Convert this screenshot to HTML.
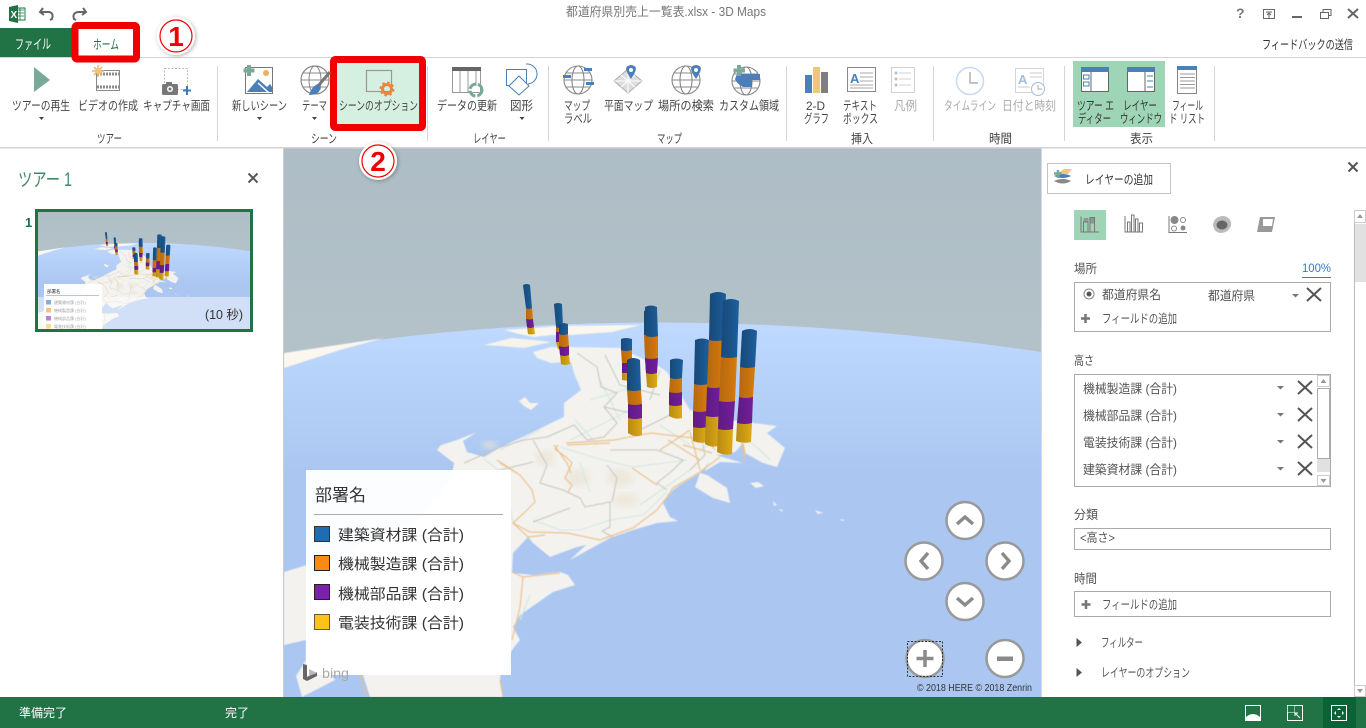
<!DOCTYPE html>
<html lang="ja"><head><meta charset="utf-8"><title>3D Maps</title>
<style>
html,body{margin:0;padding:0;background:#fff;overflow:hidden}
svg{display:block}
text{font-family:"Liberation Sans","Noto Sans CJK JP",sans-serif;font-size:12.4px;fill:#444}
.g{fill:#aaa}.s{fill:#555;font-size:12.4px}.p{fill:#555;font-size:12.5px}
.y{fill:url(#gy)}.v{fill:url(#gv)}.o{fill:url(#go)}.b{fill:url(#gb)}
.rd{fill:none;stroke:#ecc184;stroke-width:1.2}
.rg{fill:none;stroke:#c6c3bc;stroke-width:1}
.rn{fill:none;stroke:#d2e8e1;stroke-width:1.1}
.nb{fill:#fff;stroke:#999;stroke-width:2.5}
.na{fill:none;stroke:#8a8a8a;stroke-width:3.4}
</style></head><body>
<svg xmlns="http://www.w3.org/2000/svg" width="1366" height="728" viewBox="0 0 1366 728">
<defs>
<linearGradient id="gsky" x1="0" y1="0" x2="0" y2="1"><stop offset="0" stop-color="#aebdc5"/><stop offset="1" stop-color="#bccbd0"/></linearGradient>
<linearGradient id="gsea" gradientUnits="userSpaceOnUse" x1="0" y1="320" x2="0" y2="470"><stop offset="0" stop-color="#bfd9ff"/><stop offset="1" stop-color="#abc7f1"/></linearGradient>
<linearGradient id="gb"><stop offset="0" stop-color="#17497a"/><stop offset=".5" stop-color="#1a5388"/><stop offset="1" stop-color="#1c5f9f"/></linearGradient>
<linearGradient id="go"><stop offset="0" stop-color="#b5690f"/><stop offset=".6" stop-color="#c8720d"/><stop offset="1" stop-color="#d87c0c"/></linearGradient>
<linearGradient id="gv"><stop offset="0" stop-color="#5e1a84"/><stop offset="1" stop-color="#721f9a"/></linearGradient>
<linearGradient id="gy"><stop offset="0" stop-color="#b68a14"/><stop offset=".6" stop-color="#cf9d14"/><stop offset="1" stop-color="#dcaa18"/></linearGradient>
<clipPath id="cm"><rect x="284" y="148" width="757" height="549"/></clipPath>
<clipPath id="ct"><rect x="38" y="212" width="212" height="117"/></clipPath>
<filter id="bl1"><feGaussianBlur stdDeviation="3.500"/></filter>
<filter id="bl2" x="-2%" y="-2%" width="104%" height="104%"><feGaussianBlur stdDeviation=".45"/></filter>
<filter id="sh" x="-30%" y="-30%" width="160%" height="160%"><feDropShadow dx="1" dy="1" stdDeviation="2" flood-color="#000" flood-opacity=".3"/></filter>
<g id="mapg">
<rect x="284" y="148" width="757" height="549" fill="url(#gsky)"/>
<path d="M284 354Q640 292 1041 352V697H284Z" fill="url(#gsea)"/>
<g filter="url(#bl2)">
<path d="M284 353L384 338 340 350 284 368Z" fill="#fbf7ee"/>
<path d="M504 330L560 326 641 325 612 332 571 335 551 335 534 337 515 333Z" fill="#fbf7ee"/>
<path d="M484 345L511 338 535 340 551 342 524 348 500 346Z" fill="#f6f3ea"/>
<path d="M519 401L525 397 530 403 539 403 531 410 524 406Z" fill="#f6f3ea"/>
<g fill="#f3f2ee">
<polygon points="533,352 551,347 574,347 620,348 660,367 667,372 690,410 735,421 743,443 735,452 712,456 705,468 700,473 680,485 673,490 663,503 670,517 678,521 657,523 633,530 610,538 570,560 586,545 577,547 550,557 533,543 528,537 513,553 512,573 533,575 560,572 568,575 575,585 553,592 520,615 513,627 520,640 512,650 500,677 503,697 370,697 362,672 330,672 335,680 302,697 296,676 306,660 306,640 284,645 284,572 340,555 420,520 444,487 451,480 454,463 437,450 441,445 457,440 477,432 463,441 467,452 484,457 501,447 531,433 551,423 564,417 564,403 581,390 574,373 571,362 551,363 537,358"/>
<polygon points="730,420 777,426 767,433 785,448 777,467 763,463 745,453 743,443"/>
<polygon points="700,473 707,475 727,488 730,503 713,498 695,487"/>
<polygon points="712,454 743,463 720,462 705,471"/>
<path d="M750 483L758 482 764 486 756 488Z M773 501L777 505 774 506Z M779 509L783 510 782 512Z M815 510L823 513 818 514Z M840 519L845 520 842 521Z"/>
</g>
<g fill="#ebe4d6" opacity=".75"><ellipse cx="545" cy="458" rx="10" ry="8" filter="url(#bl1)"/><ellipse cx="578" cy="478" rx="12" ry="9" filter="url(#bl1)"/><ellipse cx="620" cy="478" rx="13" ry="9" filter="url(#bl1)"/><ellipse cx="625" cy="500" rx="13" ry="7" filter="url(#bl1)"/><ellipse cx="490" cy="445" rx="8" ry="4" filter="url(#bl1)"/></g>
<path class="rn" d="M580 462L590 492M560 447L603 460 633 467 687 460M510 507L513 523M533 520L560 530 580 530 610 520 643 515 667 492M700 450L720 437M570 440L640 405M600 380L620 420M540 430L500 450M484 459L505 475 510 507M640 505L690 470M745 438L760 450 770 460M590 400L640 385M575 420L598 445M520 620L530 595M660 425L690 445"/>
<path class="rg" d="M533 440L547 465 540 483 563 490 580 498 585 507 610 502 610 527 602 531 613 537M570 508L533 522M607 465L617 478 612 502M610 450L657 450 683 460 673 470 657 483 667 490M464 463L501 447 524 440 547 437 574 425 587 440 604 437 617 423 604 407 617 393 601 387 597 367 577 353M650 400L660 370M640 430L680 410M604 407L640 415M474 485L500 470 533 462M700 430L705 455 690 470M605 355L620 385 660 395"/>
<path class="rd" d="M500 463L520 475 532 490 535 502 525 512 513 523 530 532 567 533 600 540 633 528 657 510 667 497 673 488 700 472 720 457M558 445L555 449 567 458 572 463 565 478 572 485 568 492M567 445L610 443M632 468L657 485M554 445L567 463 571 473M566 443L614 440 651 433 684 437 720 440M497 460L517 473M512 572L523 577 560 573M523 577L520 607 512 640M513 523L528 537 545 535M660 450L690 430M743 443L745 453M700 430L715 450M683 445L712 453M690 432L700 470M668 440L700 460M745 460L742 443M360 675L366 695M500 680L503 697"/>
</g>
<g>
<path class="y" d="M556 342H562V349Q560 350 558 349Z"/><path class="v" d="M556 332H563V342H556Z"/><path class="o" d="M556 327H563V332H556Z"/><path class="b" d="M554 304Q558 302 562 304L563 327Q559 329 556 327Z"/>
<path class="y" d="M527 327L534 327 535 334Q531 335 528 334Z"/><path class="v" d="M526 319L533 319 534 327Q530 329 527 327Z"/><path class="o" d="M526 308L532 308 533 319Q529 320 526 319Z"/><path class="b" d="M523 285Q527 283 530 285L532 308Q529 310 526 308Z"/>
<path class="y" d="M560 355L569 355 570 364Q565 366 561 364Z"/><path class="v" d="M559 346L569 346 569 355Q564 357 560 355Z"/><path class="o" d="M559 334L568 334 569 346Q564 348 559 346Z"/><path class="b" d="M559 324Q563 322 568 324L568 334Q563 336 559 334Z"/>
<path class="y" d="M622 373L630 373 628 381 622 380Z"/><path class="v" d="M622 363L632 363 630 373 622 373Z"/><path class="o" d="M621 350L632 350 632 363 622 363Z"/><path class="b" d="M621 339Q626 337 632 339L632 350Q626 352 621 350Z"/>
<path class="y" d="M646 373H650V375H646Z"/><path class="v" d="M645 358H650V373H646Z"/><path class="o" d="M644 335H650V358H645Z"/><path class="b" d="M644 311Q647 309 650 311V335H644Z"/>
<path class="y" d="M646 373L657 373 657 387Q652 389 647 387Z"/><path class="v" d="M645 358L658 358 657 373Q651 375 646 373Z"/><path class="o" d="M646 336L658 336 658 358Q651 360 645 358Z"/><path class="b" d="M645 307Q651 304 657 307L658 336Q652 338 646 336Z"/>
<path class="y" d="M628 418L642 418 642 435Q635 438 628 433Z"/><path class="v" d="M628 404L642 404 642 418Q635 420 628 418Z"/><path class="o" d="M627 390L641 390 642 404Q635 406 628 404Z"/><path class="b" d="M627 360Q633 356 640 360L641 390Q634 392 627 390Z"/>
<path class="y" d="M669 405L682 405 682 418Q676 420 669 416Z"/><path class="v" d="M669 392L682 392 682 405Q675 407 669 405Z"/><path class="o" d="M670 378L682 378 682 392Q676 394 669 392Z"/><path class="b" d="M670 360Q676 357 683 360L682 378Q676 380 670 378Z"/>
<path class="y" d="M693 427L707 427 707 442Q700 444 693 441Z"/><path class="v" d="M693 411L707 411 707 427Q700 429 693 427Z"/><path class="o" d="M694 384L708 384 707 411Q700 413 693 411Z"/><path class="b" d="M695 340Q702 337 709 340L708 384Q701 386 694 384Z"/>
<path class="y" d="M706 416L721 416 718 446Q711 448 705 444Z"/><path class="v" d="M707 387L722 387 721 416Q713 418 706 416Z"/><path class="o" d="M709 340L724 340 722 387Q714 389 707 387Z"/><path class="b" d="M710 294Q718 290 726 294L724 340Q716 342 709 340Z"/>
<path class="y" d="M737 423L752 423 751 442Q743 444 736 441Z"/><path class="v" d="M739 397L753 397 752 423Q745 425 737 423Z"/><path class="o" d="M740 367L755 367 753 397Q746 399 739 397Z"/><path class="b" d="M742 331Q750 327 757 331L755 367Q747 369 740 367Z"/>
<path class="y" d="M718 429L733 429 732 454Q724 456 717 452Z"/><path class="v" d="M719 401L735 401 733 429Q725 431 718 429Z"/><path class="o" d="M721 357L737 357 735 401Q727 403 719 401Z"/><path class="b" d="M723 301Q731 297 739 301L737 357Q729 359 721 357Z"/>
</g>
</g>
</defs>

<g clip-path="url(#cm)"><use href="#mapg"/></g>
<rect x="283" y="148" width="1" height="549" fill="#ccc"/>

<rect width="1366" height="148" fill="#fff"/>
<rect x="0" y="57" width="1366" height="1" fill="#d4d4d4"/>
<rect x="0" y="147" width="1366" height="1.5" fill="#d4d4d4"/>
<rect x="14" y="8" width="11" height="12" fill="#fff" stroke="#217346"/><path d="M17 10H24M17 13H24M17 16H24M20 8V20" stroke="#217346" stroke-width=".8"/>
<path d="M9 7L18 5V23L9 21Z" fill="#217346"/><text x="10.500" y="18" style="font-size:10px;font-weight:bold;fill:#fff">X</text>
<path d="M43 8L40 12 44 15M41 12H49Q54 13 52 19L50 20" fill="none" stroke="#666" stroke-width="2"/>
<path d="M83 8L86 12 82 15M85 12H78Q72 13 74 19L76 20" fill="none" stroke="#666" stroke-width="2"/>
<text x="566" y="16" textLength="200" lengthAdjust="spacingAndGlyphs" style="font-size:12.5px;fill:#777">都道府県別売上一覧表.xlsx - 3D Maps</text>
<text x="1236" y="18" style="font-size:14px;font-weight:bold;fill:#777">?</text>
<path d="M1263.500 9.500H1274.500V18.500H1263.500ZM1266 12H1272M1269 18V13.500M1267 15L1269 13 1271 15" fill="none" stroke="#666"/>
<rect x="1292" y="16" width="10" height="2" fill="#666"/>
<path d="M1320.500 12.500H1328.500V18.500H1320.500ZM1323 12V9.500H1331V15.500H1329" fill="none" stroke="#666" stroke-width="1"/>
<path d="M1348 9L1358 18M1358 9L1348 18" stroke="#666" stroke-width="2"/>
<rect x="0" y="28" width="72" height="29" fill="#217346"/>
<text x="15" y="49" textLength="36" lengthAdjust="spacingAndGlyphs" style="font-size:13.5px;fill:#fff">ファイル</text>
<rect x="75" y="25.500" width="61.500" height="33.500" rx="2" fill="#fff" stroke="#f00000" stroke-width="7"/>
<text x="93" y="49" textLength="26" lengthAdjust="spacingAndGlyphs" style="font-size:13px;fill:#217346">ホーム</text>
<text x="1262" y="49" textLength="91" lengthAdjust="spacingAndGlyphs" style="font-size:12.5px;fill:#333">フィードバックの送信</text>

<circle cx="176" cy="36" r="19" fill="#fff" filter="url(#sh)"/>
<circle cx="176" cy="36" r="16" fill="none" stroke="#f00000" stroke-width="1.200"/>
<text x="176" y="46" text-anchor="middle" style="font-size:28px;font-weight:bold;fill:#f00000">1</text>

<rect x="1073" y="61" width="92" height="66" fill="#9fd5b7"/>
<rect x="333.500" y="59.500" width="89" height="68" rx="2" fill="#d5efe0" stroke="#f00000" stroke-width="7"/>

<g fill="#d4d4d4"><rect x="217" y="66" width="1" height="75"/><rect x="427" y="66" width="1" height="75"/><rect x="548" y="66" width="1" height="75"/><rect x="786" y="66" width="1" height="75"/><rect x="933" y="66" width="1" height="75"/><rect x="1064" y="66" width="1" height="75"/><rect x="1214" y="66" width="1" height="75"/></g>

<path d="M34 67V92L50 80Z" fill="#78aa97"/>
<rect x="96.500" y="70.500" width="23" height="20" fill="#fff" stroke="#8a8a8a"/><path d="M97 74H119M97 87H119" stroke="#8a8a8a" stroke-width="3" stroke-dasharray="2 1"/>
<g stroke="#f0b060" stroke-width="1.500"><path d="M98 65V77M92 71H104M94 67L102 75M102 67L94 75"/></g><circle cx="98" cy="71" r="3" fill="#f5c078"/>
<rect x="164.500" y="68.500" width="23" height="21" fill="none" stroke="#bbb" stroke-dasharray="2 1.500"/>
<rect x="162" y="84" width="16" height="11" rx="1.500" fill="#777"/><rect x="166" y="82" width="6" height="3" fill="#777"/><circle cx="170" cy="89" r="3" fill="#fff"/><circle cx="170" cy="89" r="1.500" fill="#777"/>
<path d="M187 86V95M183 90.500H191" stroke="#3b7cc0" stroke-width="2"/>
<rect x="245.500" y="67.500" width="27" height="26" fill="#fff" stroke="#777"/>
<path d="M247 92L258 79 267 87 270 84 272 87V92Z" fill="#4a7fb8"/><path d="M258 83L269 93" stroke="#fff" stroke-width="1.500"/>
<circle cx="266" cy="73" r="3" fill="#eeb060"/>
<path d="M249 65V76M243.500 70.500H254.500" stroke="#78aa97" stroke-width="4"/>
<circle cx="315" cy="80" r="14" fill="#fff" stroke="#888" stroke-width="1.200"/><ellipse cx="315" cy="80" rx="6" ry="14" fill="none" stroke="#888"/><path d="M301 80H329M303 73H327M303 87H327" stroke="#888"/>
<path d="M330 72L318 86" stroke="#777" stroke-width="3"/><path d="M318 84Q312 86 309 95Q318 95 321 88Z" fill="#4a7fb8"/>
<rect x="366.500" y="70.500" width="25" height="21" fill="#d5efe0" stroke="#999" stroke-width="1.200"/>
<circle cx="387" cy="89" r="4.500" fill="none" stroke="#e8883a" stroke-width="3"/><circle cx="387" cy="89" r="6.500" fill="none" stroke="#e8883a" stroke-width="2" stroke-dasharray="2.500 2.600"/>
<rect x="452.500" y="68.500" width="28" height="24" fill="#fff" stroke="#999"/><rect x="452" y="67" width="29" height="4" fill="#666"/><path d="M460 71V92M468 71V92M476 71V86" stroke="#999"/>
<circle cx="476" cy="90" r="6" fill="none" stroke="#78aa97" stroke-width="3" stroke-dasharray="8 2"/>
<rect x="506.500" y="69.500" width="20" height="16" fill="#fff" stroke="#4a7fb8"/>
<path d="M526 64A10 10 0 0 1 528 84" fill="none" stroke="#4a7fb8"/>
<path d="M519 79L529 89 519 98 509 89Z" transform="translate(0,-3)" fill="#fff" stroke="#4a7fb8"/>
<g fill="none" stroke="#888" stroke-width="1.100">
<circle cx="578" cy="80" r="14"/><ellipse cx="578" cy="80" rx="6" ry="14"/><path d="M564 80H592M566 73H590M566 87H590"/>
<circle cx="686" cy="80" r="14"/><ellipse cx="686" cy="80" rx="6" ry="14"/><path d="M672 80H700M674 73H698M674 87H698"/>
<circle cx="746" cy="81" r="14"/><ellipse cx="746" cy="81" rx="6" ry="14"/><path d="M732 81H760M734 74H758M734 88H758"/>
</g>
<g fill="#4a7fb8"><rect x="563" y="75" width="8" height="3"/><rect x="584" y="68" width="8" height="3"/><rect x="586" y="82" width="8" height="3"/></g>
<path d="M614 81L628 69 642 81 628 93Z" fill="#ddd" stroke="#aaa"/><path d="M621 75L635 87M635 75L621 87M628 69V93M614 81H642" stroke="#fff"/>
<path d="M631 79C625 70 624 66 631 65C638 66 637 70 631 79Z" fill="#4a7fb8"/><circle cx="631" cy="70" r="2" fill="#fff"/>
<path d="M696 79C690 70 689 66 696 65C703 66 702 70 696 79Z" fill="#4a7fb8"/><circle cx="696" cy="70" r="2" fill="#fff"/>
<path d="M737 74H760V80H752V87H743Q737 84 735 79Z" fill="#4a7fb8"/>
<path d="M739 65V76M733.500 70.500H745" stroke="#78aa97" stroke-width="4"/>
<rect x="805" y="75" width="7" height="18" fill="#4a7fb8"/><rect x="813" y="67" width="7" height="26" fill="#eec77c"/><rect x="821" y="72" width="7" height="21" fill="#7f7f7f"/>
<rect x="847.500" y="67.500" width="28" height="24" fill="#fff" stroke="#888"/><text x="850" y="83" style="font-size:13px;font-weight:bold;fill:#4a7fb8">A</text><path d="M860 73H873M860 77H873M860 81H873M850 85H873M850 88H873" stroke="#aaa"/>
<g opacity=".45"><rect x="891.500" y="67.500" width="23" height="25" fill="#fff" stroke="#999"/><path d="M899 73H911M899 79H911M899 85H911" stroke="#999"/><circle cx="896" cy="73" r="1.500" fill="#4a7fb8"/><circle cx="896" cy="79" r="1.500" fill="#e05020"/><circle cx="896" cy="85" r="1.500" fill="#777"/></g>
<g opacity=".5"><circle cx="970" cy="81" r="13.500" fill="#fff" stroke="#8fb4dc" stroke-width="1.500"/><path d="M970 72V83H978" fill="none" stroke="#666" stroke-width="1.500"/>
<rect x="1015.500" y="68.500" width="28" height="24" fill="#fff" stroke="#aaa"/><text x="1018" y="84" style="font-size:13px;font-weight:bold;fill:#4a7fb8">A</text><path d="M1030 73H1042M1030 77H1042M1018 87H1030" stroke="#999"/><circle cx="1038" cy="89" r="6.500" fill="#fff" stroke="#4a7fb8"/><path d="M1038 85V89H1042" fill="none" stroke="#555"/></g>
<rect x="1081.500" y="67.500" width="27" height="24" fill="#fff" stroke="#666"/><rect x="1081" y="67" width="28" height="5" fill="#4a7fb8"/><path d="M1091 72V91" stroke="#666"/><rect x="1083.500" y="75" width="5.500" height="4" fill="none" stroke="#4a7fb8"/><rect x="1083.500" y="82" width="5.500" height="4" fill="none" stroke="#4a7fb8"/>
<rect x="1127.500" y="67.500" width="27" height="24" fill="#fff" stroke="#666"/><rect x="1127" y="67" width="28" height="5" fill="#4a7fb8"/><path d="M1145 72V91" stroke="#666"/><path d="M1147 76H1153M1147 81H1153M1147 87H1153" stroke="#4a7fb8"/>
<rect x="1177.500" y="66.500" width="19" height="27" fill="#fff" stroke="#888"/><rect x="1177" y="66" width="20" height="4" fill="#4a7fb8"/><path d="M1180 74H1195M1180 77.500H1195M1180 81H1195M1180 84.500H1195M1180 88H1195" stroke="#999"/>

<text x="12" y="110" textLength="58" lengthAdjust="spacingAndGlyphs">ツアーの再生</text>
<text x="78" y="110" textLength="60" lengthAdjust="spacingAndGlyphs">ビデオの作成</text>
<text x="143" y="110" textLength="67" lengthAdjust="spacingAndGlyphs">キャプチャ画面</text>
<text x="232" y="110" textLength="55" lengthAdjust="spacingAndGlyphs">新しいシーン</text>
<text x="302" y="110" textLength="25" lengthAdjust="spacingAndGlyphs">テーマ</text>
<text x="339" y="110" textLength="79" lengthAdjust="spacingAndGlyphs">シーンのオプション</text>
<text x="437" y="110" textLength="60" lengthAdjust="spacingAndGlyphs">データの更新</text>
<text x="510" y="110" textLength="23" lengthAdjust="spacingAndGlyphs">図形</text>
<text x="564" y="110" textLength="26" lengthAdjust="spacingAndGlyphs">マップ</text>
<text x="564" y="123" textLength="28" lengthAdjust="spacingAndGlyphs">ラベル</text>
<text x="604" y="110" textLength="49" lengthAdjust="spacingAndGlyphs">平面マップ</text>
<text x="658" y="110" textLength="56" lengthAdjust="spacingAndGlyphs">場所の検索</text>
<text x="719" y="110" textLength="60" lengthAdjust="spacingAndGlyphs">カスタム領域</text>
<text x="806" y="110" textLength="19" lengthAdjust="spacingAndGlyphs">2-D</text>
<text x="804" y="123" textLength="25" lengthAdjust="spacingAndGlyphs">グラフ</text>
<text x="843" y="110" textLength="34" lengthAdjust="spacingAndGlyphs">テキスト</text>
<text x="843" y="123" textLength="35" lengthAdjust="spacingAndGlyphs">ボックス</text>
<text x="894" y="110" textLength="23" lengthAdjust="spacingAndGlyphs" class="g">凡例</text>
<text x="944" y="110" textLength="52" lengthAdjust="spacingAndGlyphs" class="g">タイムライン</text>
<text x="1002" y="110" textLength="54" lengthAdjust="spacingAndGlyphs" class="g">日付と時刻</text>
<text x="1077" y="110" textLength="37" lengthAdjust="spacingAndGlyphs" style="fill:#333">ツアー エ</text>
<text x="1078" y="123" textLength="33" lengthAdjust="spacingAndGlyphs" style="fill:#333">ディター</text>
<text x="1123" y="110" textLength="34" lengthAdjust="spacingAndGlyphs" style="fill:#333">レイヤー</text>
<text x="1120" y="123" textLength="42" lengthAdjust="spacingAndGlyphs" style="fill:#333">ウィンドウ</text>
<text x="1172" y="110" textLength="31" lengthAdjust="spacingAndGlyphs">フィール</text>
<text x="1169" y="123" textLength="36" lengthAdjust="spacingAndGlyphs">ド リスト</text>
<g fill="#444"><path d="M39 117H44L41.500 120Z M257 117H262L259.500 120Z M312 117H317L314.500 120Z M519.500 117H524.500L522 120Z"/></g>
<text x="97" y="143" textLength="25" lengthAdjust="spacingAndGlyphs">ツアー</text>
<text x="311" y="143" textLength="26" lengthAdjust="spacingAndGlyphs">シーン</text>
<text x="473" y="143" textLength="33" lengthAdjust="spacingAndGlyphs">レイヤー</text>
<text x="657" y="143" textLength="25" lengthAdjust="spacingAndGlyphs">マップ</text>
<text x="851" y="143" textLength="22" lengthAdjust="spacingAndGlyphs">挿入</text>
<text x="989" y="143" textLength="23" lengthAdjust="spacingAndGlyphs">時間</text>
<text x="1130" y="143" textLength="23" lengthAdjust="spacingAndGlyphs">表示</text>

<circle cx="378" cy="161" r="19" fill="#fff" filter="url(#sh)"/>
<circle cx="378" cy="161" r="16" fill="none" stroke="#f00000" stroke-width="1.200"/>
<text x="378" y="171" text-anchor="middle" style="font-size:28px;font-weight:bold;fill:#f00000">2</text>

<rect x="0" y="148.500" width="283" height="549" fill="#fff"/>
<text x="18" y="186" textLength="54" lengthAdjust="spacingAndGlyphs" style="font-size:19px;fill:#3f8a63">ツアー 1</text>
<path d="M248.500 173.500L257.500 182.500M257.500 173.500L248.500 182.500" stroke="#555" stroke-width="2"/>
<text x="25" y="227" style="font-size:13px;font-weight:bold;fill:#217346">1</text>
<g clip-path="url(#ct)"><use href="#mapg" transform="translate(-41.520,152.560) scale(.28)"/>
<rect x="44" y="284" width="58" height="46" fill="#fff" opacity=".95"/>
<text x="47" y="293" style="font-size:4.500px;fill:#333">部署名</text><rect x="46" y="295" width="53" height=".7" fill="#aaa"/>
<rect x="46" y="300" width="5" height="4.500" fill="#1f6cb0"/><rect x="46" y="308" width="5" height="4.500" fill="#f98a12"/><rect x="46" y="316" width="5" height="4.500" fill="#7b20a8"/><rect x="46" y="324" width="5" height="4.500" fill="#ffc21a"/>
<text x="54" y="304" style="font-size:4px;fill:#555">建築資材課 (合計)</text><text x="54" y="312" style="font-size:4px;fill:#555">機械製造課 (合計)</text><text x="54" y="320" style="font-size:4px;fill:#555">機械部品課 (合計)</text><text x="54" y="328" style="font-size:4px;fill:#555">電装技術課 (合計)</text>
<rect x="38" y="297" width="212" height="32" fill="#fff" opacity=".45"/></g>
<rect x="36.500" y="210.500" width="215" height="120" fill="none" stroke="#217346" stroke-width="3"/>
<text x="205" y="319" textLength="38" lengthAdjust="spacingAndGlyphs" style="font-size:12.5px;fill:#333">(10 秒)</text>

<rect x="306" y="470" width="205" height="205" fill="#fff" opacity=".96"/>
<text x="315" y="501" textLength="51" lengthAdjust="spacingAndGlyphs" style="font-size:17px;fill:#333">部署名</text>
<rect x="314" y="514" width="189" height="1" fill="#aaa"/>
<rect x="314.500" y="526.500" width="15" height="15" fill="#1f6cb0" stroke="#333"/>
<rect x="314.500" y="555.500" width="15" height="15" fill="#f98a12" stroke="#222"/>
<rect x="314.500" y="584.500" width="15" height="15" fill="#7b20a8" stroke="#222"/>
<rect x="314.500" y="614.500" width="15" height="15" fill="#ffc21a" stroke="#665a30"/>
<text x="338" y="540" textLength="126" lengthAdjust="spacingAndGlyphs" style="font-size:15px;fill:#333">建築資材課 (合計)</text>
<text x="338" y="569" textLength="126" lengthAdjust="spacingAndGlyphs" style="font-size:15px;fill:#333">機械製造課 (合計)</text>
<text x="338" y="599" textLength="126" lengthAdjust="spacingAndGlyphs" style="font-size:15px;fill:#333">機械部品課 (合計)</text>
<text x="338" y="628" textLength="126" lengthAdjust="spacingAndGlyphs" style="font-size:15px;fill:#333">電装技術課 (合計)</text>
<path d="M303 664L307 665V677L317 672 317 676 307 681 303 679Z" fill="#666"/><path d="M309 669L317 673 309 676Z" fill="#bbb"/>
<text x="322" y="678" textLength="27" lengthAdjust="spacingAndGlyphs" style="font-size:14px;fill:#aaa">bing</text>

<circle class="nb" cx="965" cy="520.500" r="18.500"/><path class="na" d="M957 524L965 517 973 524"/>
<circle class="nb" cx="924" cy="561" r="18.500"/><path class="na" d="M928 553L921 561 928 569"/>
<circle class="nb" cx="1005" cy="561" r="18.500"/><path class="na" d="M1002 553L1009 561 1002 569"/>
<circle class="nb" cx="965" cy="601.500" r="18.500"/><path class="na" d="M957 598L965 605 973 598"/>
<circle class="nb" cx="925" cy="658.500" r="18.500"/><path d="M925 650V667M916.500 658.500H933.500" stroke="#8a8a8a" stroke-width="3.500"/>
<rect x="907.500" y="641.500" width="35" height="35" fill="none" stroke="#333" stroke-dasharray="2 1.500"/>
<circle class="nb" cx="1005" cy="658.500" r="18.500"/><rect x="997" y="656.500" width="16" height="4.500" fill="#8a8a8a"/>
<text x="917" y="691" textLength="115" lengthAdjust="spacingAndGlyphs" style="font-size:10px;fill:#333">© 2018 HERE  © 2018 Zenrin</text>

<rect x="1041" y="148.500" width="325" height="549" fill="#fff"/>
<rect x="1041" y="148.500" width="1" height="549" fill="#d4dbe2"/>
<path d="M1348.500 162.500L1357.500 171.500M1357.500 162.500L1348.500 171.500" stroke="#555" stroke-width="2"/>
<rect x="1047.500" y="163.500" width="123" height="30" fill="#fff" stroke="#c4c4c4"/>
<path d="M1054 176Q1063 172 1071 176Q1063 180 1054 176Z" fill="#4a7fb8"/><path d="M1054 181Q1063 177 1071 181Q1063 186 1054 181Z" fill="#888"/><path d="M1060 172L1064 169H1072L1068 174H1061Z" fill="#eec77c"/>
<path d="M1058 170V178M1054 173.500H1062" stroke="#78aa97" stroke-width="2.500"/>
<text x="1085" y="184" textLength="68" lengthAdjust="spacingAndGlyphs" style="fill:#333">レイヤーの追加</text>
<rect x="1354" y="210" width="1" height="487" fill="#bbb"/>
<rect x="1354.500" y="210.500" width="11" height="12" fill="#fff" stroke="#ccc"/><path d="M1357 218H1363L1360 214Z" fill="#999"/>
<rect x="1355" y="224" width="11" height="58" fill="#e1e1e1"/>
<rect x="1354.500" y="685.500" width="11" height="11" fill="#fff" stroke="#ccc"/><path d="M1357 689H1363L1360 693Z" fill="#999"/>
<rect x="1074" y="210" width="32" height="30" fill="#9fd5b7"/>
<path d="M1081 216.500V232H1099M1083.500 232V222H1088V232M1090 232V217.500H1094.500V232" fill="none" stroke="#777"/><rect x="1090" y="217.500" width="5" height="6" fill="#777" opacity=".6"/><rect x="1083.500" y="218" width="5" height="4" fill="#777" opacity=".6"/>
<path d="M1125 216V232H1143M1127.500 232V222H1130V232M1131.500 232V215H1134V232M1135.500 232V219H1138V232M1139.500 232V223H1142.500V232" fill="none" stroke="#777"/>
<path d="M1169 216V232.500H1187" fill="none" stroke="#777"/><circle cx="1174.500" cy="220" r="4" fill="#888"/><circle cx="1183" cy="220" r="2.500" fill="none" stroke="#888"/><circle cx="1174" cy="228.500" r="2.500" fill="none" stroke="#888"/><circle cx="1183" cy="228" r="2.500" fill="#888"/>
<path d="M1213 225Q1214 216 1224 216Q1232 218 1231 226Q1228 233 1220 233Q1214 232 1213 225Z" fill="#bbb"/><ellipse cx="1222" cy="225" rx="5.500" ry="4.500" fill="#666"/>
<path d="M1260 217H1275L1272 232H1257Z" fill="#999"/><path d="M1263 219H1273L1272 226H1263Z" fill="#fff"/>
<text x="1074" y="273" textLength="23" lengthAdjust="spacingAndGlyphs" class="p">場所</text>
<text x="1302" y="272" textLength="29" lengthAdjust="spacingAndGlyphs" style="font-size:12px;fill:#2b7cd3">100%</text>
<rect x="1302" y="277" width="29" height="1" fill="#2b7cd3"/>
<rect x="1074.500" y="282.500" width="256" height="49" fill="#fff" stroke="#aaa"/>
<circle cx="1089" cy="294" r="5" fill="#fff" stroke="#888"/><circle cx="1089" cy="294" r="2.500" fill="#555"/>
<text x="1102" y="299" textLength="59" lengthAdjust="spacingAndGlyphs" class="s">都道府県名</text>
<text x="1208" y="300" textLength="47" lengthAdjust="spacingAndGlyphs" class="s">都道府県</text>
<path d="M1292 294H1299L1295.500 297.500Z" fill="#777"/>
<path d="M1307 288L1321 301M1321 288L1307 301" stroke="#555" stroke-width="2"/>
<path d="M1085.500 314V323M1081 318.500H1090" stroke="#777" stroke-width="2.500"/>
<text x="1102" y="323" textLength="75" lengthAdjust="spacingAndGlyphs" class="s">フィールドの追加</text>
<text x="1074" y="365" textLength="20" lengthAdjust="spacingAndGlyphs" class="p">高さ</text>
<rect x="1074.500" y="374.500" width="256" height="112" fill="#fff" stroke="#aaa"/>
<text x="1083" y="393" textLength="94" lengthAdjust="spacingAndGlyphs" class="s">機械製造課 (合計)</text>
<text x="1083" y="420" textLength="94" lengthAdjust="spacingAndGlyphs" class="s">機械部品課 (合計)</text>
<text x="1083" y="447" textLength="94" lengthAdjust="spacingAndGlyphs" class="s">電装技術課 (合計)</text>
<text x="1083" y="474" textLength="94" lengthAdjust="spacingAndGlyphs" class="s">建築資材課 (合計)</text>
<path d="M1277 386H1284L1280.500 389.500ZM1277 413H1284L1280.500 416.500ZM1277 440H1284L1280.500 443.500ZM1277 467H1284L1280.500 470.500Z" fill="#777"/>
<path d="M1298 381L1312 394M1312 381L1298 394M1298 408L1312 421M1312 408L1298 421M1298 435L1312 448M1312 435L1298 448M1298 462L1312 475M1312 462L1298 475" stroke="#555" stroke-width="2"/>
<rect x="1317.500" y="375.500" width="12" height="11" fill="#fff" stroke="#ccc"/><path d="M1320.500 383H1326.500L1323.500 379Z" fill="#999"/>
<rect x="1317.500" y="388.500" width="12" height="70" fill="#fff" stroke="#aaa"/>
<rect x="1317" y="459" width="13" height="13" fill="#e1e1e1"/>
<rect x="1317.500" y="475.500" width="12" height="10" fill="#fff" stroke="#ccc"/><path d="M1320.500 479H1326.500L1323.500 483Z" fill="#999"/>
<text x="1074" y="519" textLength="24" lengthAdjust="spacingAndGlyphs" class="p">分類</text>
<rect x="1074.500" y="528.500" width="256" height="21" fill="#fff" stroke="#aaa"/>
<text x="1080" y="542" textLength="35" lengthAdjust="spacingAndGlyphs" class="s">&lt;高さ&gt;</text>
<text x="1074" y="583" textLength="23" lengthAdjust="spacingAndGlyphs" class="p">時間</text>
<rect x="1074.500" y="591.500" width="256" height="25" fill="#fff" stroke="#aaa"/>
<path d="M1086 600V609M1081.500 604.500H1090.500" stroke="#777" stroke-width="2.500"/>
<text x="1102" y="609" textLength="75" lengthAdjust="spacingAndGlyphs" class="s">フィールドの追加</text>
<path d="M1076.500 638V647L1082 642.500Z M1076.500 668V677L1082 672.500Z" fill="#555"/>
<text x="1101" y="647" textLength="42" lengthAdjust="spacingAndGlyphs" class="s">フィルター</text>
<text x="1101" y="677" textLength="89" lengthAdjust="spacingAndGlyphs" class="s">レイヤーのオプション</text>

<rect x="0" y="697" width="1366" height="31" fill="#217346"/>
<rect x="1323" y="697" width="33" height="31" fill="#0a6236"/>
<text x="19" y="717" textLength="48" lengthAdjust="spacingAndGlyphs" style="font-size:12px;fill:#fff">準備完了</text>
<text x="225" y="717" textLength="24" lengthAdjust="spacingAndGlyphs" style="font-size:12px;fill:#fff">完了</text>
<rect x="1245.500" y="705.500" width="15" height="15" fill="none" stroke="#fff"/><path d="M1246 720V717Q1253 711 1260 717V720Z" fill="#fff"/>
<rect x="1287.500" y="705.500" width="15" height="15" fill="none" stroke="#fff"/><rect x="1287.500" y="705.500" width="7" height="7" fill="#217346" stroke="#fff" stroke-dasharray="1 1"/><path d="M1300 718L1295 713M1295 716V713H1298" fill="none" stroke="#fff"/>
<rect x="1331.500" y="705.500" width="15" height="15" fill="none" stroke="#fff"/><path d="M1339 708L1341 710H1337ZM1339 718L1341 716H1337ZM1334 713L1336 711V715ZM1344 713L1342 711V715Z" fill="#fff"/>
</svg>
</body></html>
